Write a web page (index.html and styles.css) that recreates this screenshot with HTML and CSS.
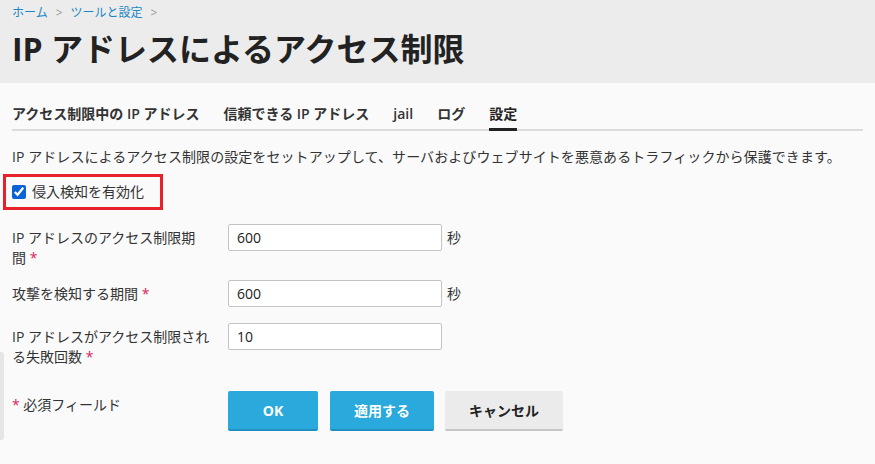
FILE: index.html
```html
<!DOCTYPE html>
<html lang="ja">
  <head>
    <meta charset="UTF-8" />
    <title>IP アドレスによるアクセス制限</title>
    <link rel="stylesheet" href="styles.css">
  </head>
  <body>
    <div class="header">
      <div class="crumbs">
        <a href="#">ホーム</a><span class="sep">&gt;</span><a href="#">ツールと設定</a><span class="sep">&gt;</span>
      </div>
      <h1>IP アドレスによるアクセス制限</h1>
    </div>

    <div class="side-handle"></div>

    <div class="content">
      <div class="tabs">
        <a href="#" class="tab">アクセス制限中の IP アドレス</a>
        <a href="#" class="tab">信頼できる IP アドレス</a>
        <a href="#" class="tab">jail</a>
        <a href="#" class="tab">ログ</a>
        <a href="#" class="tab active">設定</a>
      </div>

      <p class="hint">IP アドレスによるアクセス制限の設定をセットアップして、サーバおよびウェブサイトを悪意あるトラフィックから保護できます。</p>

      <div class="highlight">
        <label class="check"><input type="checkbox" checked /> 侵入検知を有効化</label>
      </div>

      <div class="row">
        <label class="lbl" for="ban">IP アドレスのアクセス制限期間&nbsp;<span class="req">*</span></label>
        <input id="ban" class="field" type="text" value="600" />
        <span class="unit">秒</span>
      </div>
      <div class="row">
        <label class="lbl" for="find">攻撃を検知する期間&nbsp;<span class="req">*</span></label>
        <input id="find" class="field" type="text" value="600" />
        <span class="unit">秒</span>
      </div>
      <div class="row">
        <label class="lbl" for="retry">IP アドレスがアクセス制限される失敗回数&nbsp;<span class="req">*</span></label>
        <input id="retry" class="field" type="text" value="10" />
      </div>

      <div class="row actions">
        <div class="lbl"><span class="req">*</span> 必須フィールド</div>
        <button class="btn primary ok">OK</button>
        <button class="btn primary apply">適用する</button>
        <button class="btn cancel">キャンセル</button>
      </div>
    </div>
  </body>
</html>
```

FILE: styles.css
```css
body {
  margin: 0;
  background-color: #fafafa;
  color: #333;
  font-family: "Open Sans", "Noto Sans CJK JP", sans-serif;
  font-size: 14px;
}
.header {
  background-color: #ececec;
  padding: 5px 12px 0 12px;
  height: 78px;
}
.crumbs {
  font-size: 12px;
  line-height: 16px;
}
.crumbs a {
  color: #1c87c5;
  text-decoration: none;
}
.sep {
  color: #999;
  margin: 0 8px;
}
h1 {
  margin: 8px 0 0 0;
  font-size: 32px;
  line-height: 40px;
  font-weight: 700;
  color: #222;
}
.side-handle {
  position: absolute;
  left: 0;
  top: 352px;
  width: 4px;
  height: 88px;
  background-color: #e6e6e6;
  border-radius: 0 3px 3px 0;
}
.content {
  padding: 0 12px;
}
.tabs {
  display: flex;
  gap: 24px;
  margin-top: 21px;
  border-bottom: 2px solid #dcdcdc;
}
.tab {
  color: #333;
  text-decoration: none;
  font-weight: 600;
  line-height: 20px;
  padding-bottom: 4px;
  margin-bottom: -2px;
  border-bottom: 3px solid transparent;
}
.tab.active {
  border-bottom-color: #222;
  color: #222;
}
.hint {
  margin: 16px 0 0 0;
  line-height: 20px;
  letter-spacing: 0.08px;
}
.highlight {
  margin: 7px 0 0 -9px;
  width: 148px;
  height: 30px;
  border: 3px solid #e8202a;
  display: flex;
  align-items: center;
  padding-left: 6px;
}
.check {
  display: flex;
  align-items: center;
  gap: 6px;
  line-height: 20px;
}
.check input {
  margin: 0;
  width: 14px;
  height: 14px;
  accent-color: #0a63d6;
}
.row {
  display: flex;
  align-items: flex-start;
  margin-top: 14px;
}
.row + .row {
  margin-top: 16px;
}
.lbl {
  width: 200px;
  margin-right: 16px;
  line-height: 20px;
  padding-top: 4px;
  margin-bottom: -4px;
}
.req {
  color: #d6265a;
}
.field {
  width: 214px;
  height: 27px;
  box-sizing: border-box;
  border: 1px solid #c4c4c4;
  border-radius: 2px;
  padding: 0 8px;
  font-family: "Open Sans", "Noto Sans CJK JP", sans-serif;
  font-size: 14px;
  color: #222;
  background-color: #fff;
}
.unit {
  margin-left: 5px;
  line-height: 27px;
}
.row + .actions {
  margin-top: 28px;
}
.btn {
  height: 40px;
  border: none;
  border-radius: 2px;
  font-family: "Open Sans", "Noto Sans CJK JP", sans-serif;
  font-size: 14px;
  font-weight: 700;
  cursor: pointer;
}
.primary {
  background-color: #29a9dc;
  color: #fff;
  border-bottom: 2px solid #1f8fc0;
}
.ok {
  width: 90px;
  margin-right: 12px;
}
.apply {
  width: 104px;
  margin-right: 11px;
}
.cancel {
  background-color: #ebebeb;
  color: #222;
  border-bottom: 2px solid #c6c6c6;
  width: 118px;
}
```
